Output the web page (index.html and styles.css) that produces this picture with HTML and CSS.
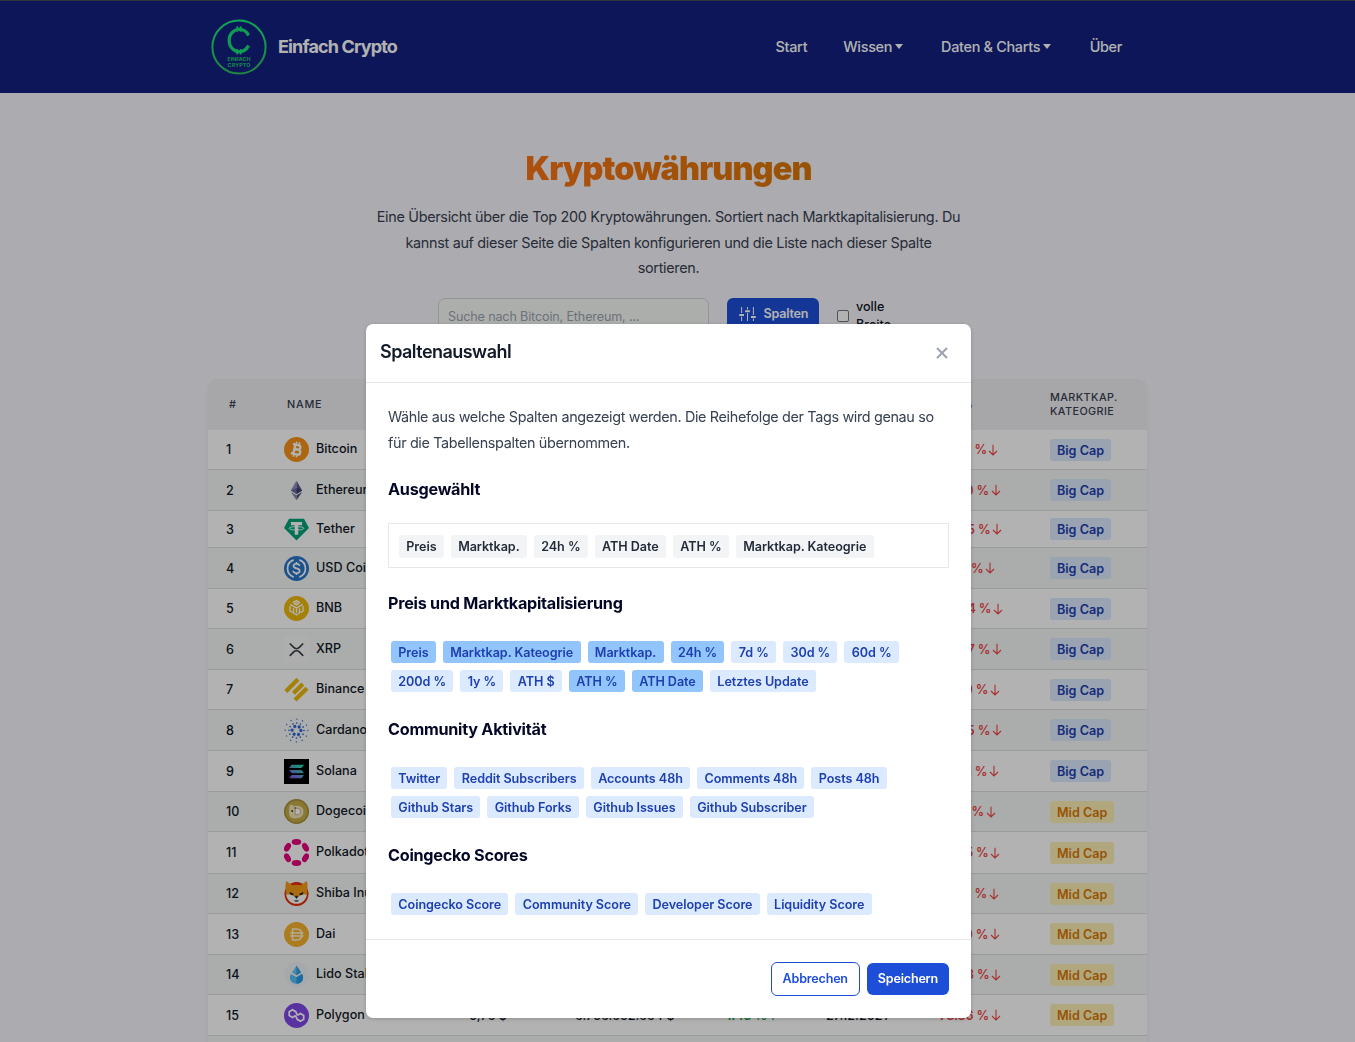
FILE: index.html
```html
<!DOCTYPE html>
<html lang="de">
<head>
<meta charset="utf-8">
<title>Kryptowährungen – Einfach Crypto</title>
<link rel="stylesheet" href="styles.css">
</head>
<body>
<svg class="defs" width="0" height="0" aria-hidden="true">
  <symbol id="down" viewBox="0 0 10 12"><path d="M5 .8v10M1 7l4 4 4-4" fill="none" stroke="currentColor" stroke-width="1.1"/></symbol>
  <symbol id="up" viewBox="0 0 10 12"><path d="M5 11.2v-10M1 5l4-4 4 4" fill="none" stroke="currentColor" stroke-width="1.1"/></symbol>
</svg>
<header class="topbar">
  <div class="topbar-inner">
    <a class="brand">
      <svg class="logo" viewBox="0 0 56 56">
        <defs><linearGradient id="lg" x1="0" y1="0" x2="0" y2="1"><stop offset="0" stop-color="#16ef7c"/><stop offset="1" stop-color="#2fbd5c"/></linearGradient></defs>
        <circle cx="28" cy="28" r="26.6" fill="none" stroke="url(#lg)" stroke-width="2"/>
        <path d="M37.500 16.500A10.200 11.200 0 1 0 37.500 26.500" fill="none" stroke="#17e078" stroke-width="3.200"/>
        <path d="M26.300 7.200v5.500M29.700 7.200v5.500M26.300 30v5.500M29.700 30v5.500" stroke="#17e078" stroke-width="1.800"/>
        <text x="28" y="42" class="logo-text" textLength="23">EINFACH</text>
        <text x="28" y="48" class="logo-text" textLength="23">CRYPTO</text>
      </svg>
      <span class="brand-name">Einfach Crypto</span>
    </a>
    <nav class="nav">
      <a class="n-start">Start</a>
      <a class="n-wissen">Wissen<i class="caret"></i></a>
      <a class="n-daten">Daten &amp; Charts<i class="caret"></i></a>
      <a>Über</a>
    </nav>
  </div>
</header>

<main>
  <section class="intro">
    <h1>Kryptowährungen</h1>
    <p>Eine Übersicht über die Top 200 Kryptowährungen. Sortiert nach Marktkapitalisierung. Du kannst auf dieser Seite die Spalten konfigurieren und die Liste nach dieser Spalte sortieren.</p>
    <div class="controls">
      <div class="search">Suche nach Bitcoin, Ethereum, ...</div>
      <div class="columns-btn">
        <svg width="17" height="16" viewBox="0 0 17 16" fill="none" stroke="#fff"><path d="M2.6 1v6M2.6 10.500v4.500M8.500 1v2.500M8.500 7v8M14.400 1v8M14.400 12.500v2.500" stroke-width="1"/><path d="M.2 9h4.800M6.100 5.200h4.800M12 11h4.800" stroke-width="2"/></svg>
        Spalten
      </div>
      <label class="full"><i class="check"></i><span>volle Breite</span></label>
    </div>
  </section>

  <section class="table">
    <div class="row head"><span class="hash">#</span><span class="hname">Name</span><span></span><span></span><span></span><span></span><span>ATH %</span><span>Marktkap. Kateogrie</span></div>

    <div class="row h40"><b>1</b><span class="coin"><svg viewBox="0 0 25 25"><circle cx="12.500" cy="12.500" r="12.500" fill="#f7931a"/><g transform="rotate(13 12.5 12.5)" fill="none" stroke="#fff" stroke-width="2.300"><path d="M10.300 7.500v10M7.800 7.700h5.700a2.300 2.300 0 0 1 0 4.600h-3.200M10.300 12.300h4a2.500 2.500 0 0 1 0 5H7.800"/><path d="M11 4.700v3M14 4.700v3M11 17.300v3M14 17.300v3" stroke-width="1.500"/></g></svg>Bitcoin</span><span></span><span></span><span></span><span></span><span class="neg">-71.53 %<svg><use href="#down"/></svg></span><span><em class="big">Big Cap</em></span></div>
    <div class="row h41"><b>2</b><span class="coin"><svg viewBox="0 0 25 25"><path d="M12.500 2.800 6.800 12.600l5.700 3.300z" fill="#8b8bb5"/><path d="M12.500 2.800l5.700 9.800-5.700 3.300z" fill="#55558a"/><path d="M12.500 10l-5.700 2.600 5.700 3.300z" fill="#6a6aa0"/><path d="M12.500 10l5.700 2.600-5.700 3.300z" fill="#3c3c70"/><path d="M6.800 13.900l5.700 8.300v-5z" fill="#8585ae"/><path d="M18.200 13.900l-5.700 8.300v-5z" fill="#51517f"/></svg>Ethereum</span><span></span><span></span><span></span><span></span><span class="neg">-74.80 %<svg><use href="#down"/></svg></span><span><em class="big">Big Cap</em></span></div>
    <div class="row h37"><b>3</b><span class="coin"><svg viewBox="0 0 25 25"><path d="M5 1.800h15l5 9.200-12.500 12.500L0 11z" fill="#00a478"/><path d="M6.900 5h11.200v3.300h-3.800v9.500h-3.600V8.300H6.900z" fill="#fff"/><ellipse cx="12.500" cy="11.300" rx="7.400" ry="1.700" fill="none" stroke="#fff" stroke-width=".9"/></svg>Tether</span><span></span><span></span><span></span><span></span><span class="neg">-24.45 %<svg><use href="#down"/></svg></span><span><em class="big">Big Cap</em></span></div>
    <div class="row h41"><b>4</b><span class="coin"><svg viewBox="0 0 25 25"><circle cx="12.500" cy="12.500" r="12.500" fill="#2775ca"/><path d="M9.700 3.900a9.100 9.100 0 0 0 0 17.200M15.300 3.900a9.100 9.100 0 0 1 0 17.200M15.500 9.900c-.2-1.300-1.300-2-3-2s-3 .8-3 2.100c0 3.200 6.200 1.600 6.200 4.900 0 1.400-1.300 2.200-3.200 2.200s-3.200-.8-3.300-2.300M12.500 5.900v2M12.500 17v2.100" fill="none" stroke="#fff" stroke-width="1.700"/></svg>USD Coin</span><span></span><span></span><span></span><span></span><span class="neg">-25.11 %<svg><use href="#down"/></svg></span><span><em class="big">Big Cap</em></span></div>
    <div class="row h40"><b>5</b><span class="coin"><svg viewBox="0 0 25 25"><circle cx="12.500" cy="12.500" r="12.500" fill="#eeb90c"/><path d="M9 6.600l3.500-2 3.500 2M6.200 8.400 12.500 12l6.300-3.600M6 10v5l2.600 1.500M19 10v5l-2.600 1.500M9.500 12.200v4.800l3 2 3-2v-4.800M12.500 12v5M10.500 7.800l2-1.100 2 1.100-2 1.200z" fill="none" stroke="#fff" stroke-width="1.300"/></svg>BNB</span><span></span><span></span><span></span><span></span><span class="neg">-58.44 %<svg><use href="#down"/></svg></span><span><em class="big">Big Cap</em></span></div>
    <div class="row h41"><b>6</b><span class="coin"><svg viewBox="0 0 25 25"><path d="M0 0h25v25H0z" fill="#fafafa"/><path d="M5.800 6.500l3.900 3.900a4 4 0 0 0 5.600 0l3.900-3.900M5.800 18.800l3.900-3.900a4 4 0 0 1 5.600 0l3.900 3.900" fill="none" stroke="#3a4145" stroke-width="1.700"/></svg>XRP</span><span></span><span></span><span></span><span></span><span class="neg">-88.47 %<svg><use href="#down"/></svg></span><span><em class="big">Big Cap</em></span></div>
    <div class="row h40"><b>7</b><span class="coin"><svg viewBox="0 0 25 25" fill="#eeb90c"><path d="M12.500.8l3 3L6.200 13.100l-3-3zM17.300 5.500l3 3L11 17.800l-3-3zM21.500 9.800l3 3L12.500 24.600l-3-3zM3.300 10l3 3-3 3-3-3z"/></svg>Binance USD</span><span></span><span></span><span></span><span></span><span class="neg">-13.00 %<svg><use href="#down"/></svg></span><span><em class="big">Big Cap</em></span></div>
    <div class="row h41"><b>8</b><span class="coin"><svg viewBox="0 0 25 25" fill="none" stroke="#3468d1" stroke-linecap="round"><circle cx="12.500" cy="12.500" r="4.400" stroke-width="3.300" stroke-dasharray=".01 4.598"/><circle cx="12.500" cy="12.500" r="7.500" stroke-width="1.700" stroke-dasharray=".01 3.917"/><circle cx="12.500" cy="12.500" r="11.400" stroke-width="1.400" stroke-dasharray=".01 5.959"/></svg>Cardano</span><span></span><span></span><span></span><span></span><span class="neg">-89.85 %<svg><use href="#down"/></svg></span><span><em class="big">Big Cap</em></span></div>
    <div class="row h41"><b>9</b><span class="coin"><svg viewBox="0 0 25 25"><defs><linearGradient id="sol" x1="0" y1="1" x2="1" y2="0"><stop stop-color="#9945ff"/><stop offset="1" stop-color="#14f195"/></linearGradient></defs><path d="M0 0h25v25H0z"/><path d="M7.600 5.800H20l-2.500 3.300H5.100zM5.100 10.900h12.400l2.500 3.300H7.600zM7.600 16H20l-2.500 3.300H5.100z" fill="url(#sol)"/></svg>Solana</span><span></span><span></span><span></span><span></span><span class="neg">-94.71 %<svg><use href="#down"/></svg></span><span><em class="big">Big Cap</em></span></div>
    <div class="row h40"><b>10</b><span class="coin"><svg viewBox="0 0 25 25"><circle cx="12.500" cy="12.500" r="12.500" fill="#a58f36"/><circle cx="12.500" cy="12.500" r="10.900" fill="#c5ac48"/><path d="M5.500 6.500l2.300-1 2 1.700c5.500-1.200 9.700.8 9.700 5.600 0 4.200-3.400 6.700-7.900 6.700S5 17.500 5 13z" fill="#f0e4b7"/><path d="M11.200 9.300h1.700c2.300 0 3.600 1.100 3.600 3.200s-1.300 3.200-3.600 3.200h-1.700z" fill="#fff" stroke="#b8a66a" stroke-width=".8"/><circle cx="8.200" cy="12" r=".9" fill="#39311c"/><circle cx="11.200" cy="9" r=".7" fill="#39311c"/></svg>Dogecoin</span><span></span><span></span><span></span><span></span><span class="neg">-87.17 %<svg><use href="#down"/></svg></span><span><em class="mid">Mid Cap</em></span></div>
    <div class="row h42"><b>11</b><span class="coin"><svg viewBox="0 0 25 27" class="tall" fill="#e6007a"><ellipse cx="12.500" cy="3" rx="4.800" ry="2.900"/><ellipse cx="12.500" cy="24" rx="4.800" ry="2.900"/><ellipse cx="3.500" cy="8.300" rx="4.700" ry="2.900" transform="rotate(-60 3.500 8.300)"/><ellipse cx="21.500" cy="8.300" rx="4.700" ry="2.900" transform="rotate(60 21.500 8.300)"/><ellipse cx="3.500" cy="18.800" rx="4.700" ry="2.900" transform="rotate(60 3.500 18.800)"/><ellipse cx="21.500" cy="18.800" rx="4.700" ry="2.900" transform="rotate(-60 21.500 18.800)"/></svg>Polkadot</span><span></span><span></span><span></span><span></span><span class="neg">-91.45 %<svg><use href="#down"/></svg></span><span><em class="mid">Mid Cap</em></span></div>
    <div class="row h40"><b>12</b><span class="coin"><svg viewBox="0 0 25 25"><circle cx="12.500" cy="13" r="12" fill="#e42d04"/><path d="M2.200 0l6 4.300c2.700-.9 6-.9 8.600 0L22.800 0c1 4 1 6.500.2 9 .5 3 0 5-1 7.500l-9.500 4-9.500-4C2 14 1.500 12 2 9 1.200 6.500 1.200 4 2.200 0z" fill="#f39b16"/><path d="M2.300 14c3.200-1 6.200 0 7.700 1.500h5c1.500-1.500 4.500-2.500 7.700-1.500-1 5.500-5 8.800-10.200 8.800S3.300 19.500 2.300 14z" fill="#fff"/><path d="M6 11.300l3.500 1.700-1 1-2-.8zM19 11.300L15.500 13l1 1 2-.8zM10.900 15.200h3.200l-1.600 2.400zM10.500 19.700c1.300.8 2.700.8 4 0z" fill="#171717" stroke="#171717" stroke-width=".5"/></svg>Shiba Inu</span><span></span><span></span><span></span><span></span><span class="neg">-90.13 %<svg><use href="#down"/></svg></span><span><em class="mid">Mid Cap</em></span></div>
    <div class="row h41"><b>13</b><span class="coin"><svg viewBox="0 0 25 25"><circle cx="12.500" cy="12.500" r="12.500" fill="#f7b22f"/><path d="M8.500 7h4.200c3.200 0 5.100 2 5.100 5.500S15.900 18 12.700 18H8.500zM6.200 11h13.200M6.200 14h13.200" fill="none" stroke="#fff3d7" stroke-width="1.500"/></svg>Dai</span><span></span><span></span><span></span><span></span><span class="neg">-27.50 %<svg><use href="#down"/></svg></span><span><em class="mid">Mid Cap</em></span></div>
    <div class="row h40"><b>14</b><span class="coin"><svg viewBox="0 0 25 25"><circle cx="12.500" cy="12.500" r="12.500" fill="#eff1f7"/><path d="M12.500 3.500L8 10.600l4.500 2.700 4.500-2.700z" fill="#66c6f5"/><path d="M12.500 3.500v9.800l4.500-2.700z" fill="#2c9fe4"/><path d="M7 12l5.500 3.200L18 12c3 5-.5 9.700-5.500 9.700S4 17 7 12z" fill="#54bff4"/><path d="M12.500 15.200L18 12c3 5-.5 9.700-5.500 9.700z" fill="#269be2"/></svg>Lido Staked Ether</span><span></span><span></span><span></span><span></span><span class="neg">-74.43 %<svg><use href="#down"/></svg></span><span><em class="mid">Mid Cap</em></span></div>
    <div class="row h41"><b>15</b><span class="coin"><svg viewBox="0 0 25 25"><circle cx="12.500" cy="12.500" r="12.500" fill="#8247e5"/><path d="M11.700 12.500l-3.200 2-3.300-2V8.700l3.300-2 3.200 2 1.800 3.600M13.500 12.300l3-1.800 3.200 2v3.800l-3.200 2-3.300-2-1.700-3.800" fill="none" stroke="#fff" stroke-width="1.700"/></svg>Polygon</span><span>0,76 $</span><span>6.756.652.664 $</span><span class="pos">1.43 %<svg><use href="#up"/></svg></span><span>27.12.2021</span><span class="neg">-73.86 %<svg><use href="#down"/></svg></span><span><em class="mid">Mid Cap</em></span></div>
    <div class="row h41"></div>
  </section>
</main>

<div class="overlay">
  <div class="modal">
    <div class="modal-head">
      <h2>Spaltenauswahl</h2>
      <svg width="12" height="12" viewBox="0 0 12 12"><path d="M1 1l10 10M11 1L1 11" stroke="#9ca3af" stroke-width="2"/></svg>
    </div>
    <div class="modal-body">
      <p>Wähle aus welche Spalten angezeigt werden. Die Reihefolge der Tags wird genau so für die Tabellenspalten übernommen.</p>
      <h3>Ausgewählt</h3>
      <div class="selected"><span>Preis</span><span>Marktkap.</span><span>24h %</span><span>ATH Date</span><span>ATH %</span><span>Marktkap. Kateogrie</span></div>
      <h3>Preis und Marktkapitalisierung</h3>
      <div class="tags"><span class="on">Preis</span><span class="on">Marktkap. Kateogrie</span><span class="on">Marktkap.</span><span class="on">24h %</span><span>7d %</span><span>30d %</span><span>60d %</span><span>200d %</span><span>1y %</span><span>ATH $</span><span class="on">ATH %</span><span class="on">ATH Date</span><span>Letztes Update</span></div>
      <h3>Community Aktivität</h3>
      <div class="tags"><span>Twitter</span><span>Reddit Subscribers</span><span>Accounts 48h</span><span>Comments 48h</span><span>Posts 48h</span><span>Github Stars</span><span>Github Forks</span><span>Github Issues</span><span>Github Subscriber</span></div>
      <h3>Coingecko Scores</h3>
      <div class="tags"><span>Coingecko Score</span><span>Community Score</span><span>Developer Score</span><span>Liquidity Score</span></div>
    </div>
    <div class="modal-foot"><div class="btn ghost">Abbrechen</div><div class="btn">Speichern</div></div>
  </div>
</div>
</body>
</html>
```
FILE: styles.css
```css
* { box-sizing: border-box; }
html, body { height: 1042px; overflow: hidden; }
body { margin: 0; font-family: Inter, "Liberation Sans", sans-serif; font-size: 14.4px; color: #111827; background: #f7f6fc; }
h1, h2, h3, p { margin: 0; }
.defs { display: block; height: 0; }

.topbar { height: 93px; background: #12207f; color: #fff; border-top: 1px solid #4b4d55; }
.topbar-inner { width: 911px; height: 91px; margin-left: 211px; display: flex; align-items: center; justify-content: space-between; }
.brand { display: flex; align-items: center; gap: 10.500px; }
.logo { width: 56px; height: 56px; margin-right: .5px; }
.logo-text { font: 600 5.400px Inter, sans-serif; fill: #20d36a; text-anchor: middle; }
.brand-name { font-size: 18px; font-weight: 700; letter-spacing: -0.860px; }
.nav { display: flex; align-items: center; font-weight: 500; letter-spacing: -0.3px; }
.nav a { display: flex; align-items: center; }
.n-start { margin-right: 36px; }
.n-wissen { margin-right: 38px; }
.n-daten { margin-right: 38.500px; }
.caret { margin-left: 3px; border: 4.500px solid transparent; border-top: 5.500px solid #fff; border-bottom: 0; }

main { width: 1337px; }
.intro { display: flex; flex-direction: column; align-items: center; height: 286px; padding-top: 53px; }
h1 { font-size: 32.4px; line-height: 46px; font-weight: 900; letter-spacing: -0.9px; color: transparent; background: linear-gradient(to right, #f97316, #d97706); background-clip: text; -webkit-background-clip: text; }
.intro p { width: 605px; margin-top: 12px; padding: 0 8px; text-align: center; line-height: 25.600px; letter-spacing: -0.310px; color: #374151; }
.controls { display: flex; align-items: flex-start; margin-top: 17px; width: 461px; }
.search { width: 271px; height: 37px; padding: 0 9px; border: 1px solid #d1d5db; border-radius: 7px; background: #f7faf7; color: #9ca3af; font-size: 12.600px; line-height: 35px; letter-spacing: -0.150px; }
.columns-btn { display: flex; align-items: center; gap: 7.500px; width: 92px; height: 32px; margin-left: 18px; padding-left: 12px; border-radius: 6px; background: #1d4ed8; color: #fff; font-size: 12.600px; font-weight: 600; letter-spacing: -0.250px; }
.full { display: flex; gap: 7px; margin-left: 18px; font-size: 12.600px; font-weight: 500; line-height: 18px; }
.full span { width: 40px; }
.check { width: 12px; height: 12px; flex: none; margin-top: 12px; border: 1px solid #767676; border-radius: 2px; background: #fff; }

.table { width: 939px; margin-left: 208px; border-radius: 8px 8px 0 0; overflow: hidden; box-shadow: 0 4px 6px rgba(0, 0, 0, .05); background: #fff; }
.row { display: grid; grid-template-columns: 76px 185px 106px 151px 100px 108px 116px 97px; align-items: center; border-bottom: 1px solid #dcdfe3; font-size: 12.600px; font-weight: 500; white-space: nowrap; }
.row:nth-child(odd) { background: #f5f8f6; }
.row b { padding-left: 18px; font-weight: 500; }
.row.head { height: 51px; border: 0; background: #f0f0f3; color: #374151; font-size: 10.800px; line-height: 14px; letter-spacing: .800px; text-transform: uppercase; white-space: normal; }
.row.head span:last-child { letter-spacing: .420px; }
.hash { padding-left: 21px; }
.hname { padding-left: 3px; }
.h37 { height: 37px; }
.h40 { height: 40px; }
.h41 { height: 41px; }
.h42 { height: 42px; }
.coin { display: flex; align-items: center; gap: 7px; padding-bottom: 2px; }
.coin svg { width: 25px; height: 25px; flex: none; margin-bottom: -2px; }
.coin svg.tall { height: 27px; }
.neg, .pos { display: flex; align-items: center; gap: 1.500px; font-weight: 600; letter-spacing: -0.100px; color: #ef4444; }
.pos { color: #16a34a; }
.neg svg, .pos svg { width: 10px; height: 12px; }
.row em { display: block; width: max-content; padding: 0 7px; border-radius: 3px; font-style: normal; font-weight: 600; height: 22px; line-height: 23px; }
.big { background: #dbeafe; color: #1e40af; }
.mid { background: #fdf0b5; color: #d97706; }

.overlay { position: fixed; inset: 0; padding: 324px 0 0 366px; background: rgba(0, 0, 0, .3); }
.modal { width: 605px; height: 694px; display: flex; flex-direction: column; border-radius: 7px; background: #fff; box-shadow: 0 1px 4px rgba(0, 0, 0, .2); }
.modal-head { height: 59px; display: flex; align-items: center; justify-content: space-between; padding: 0 23px 0 14px; border-bottom: 1px solid #e5e7eb; }
.modal-head h2 { margin-top: -3px; font-size: 18px; font-weight: 600; letter-spacing: -0.540px; }
.modal-body { height: 556px; padding: 21px 22px; }
.modal-body p { line-height: 25.600px; letter-spacing: -0.350px; color: #374151; }
.modal-body h3 { height: 26px; font-size: 16.200px; line-height: 26px; font-weight: 700; letter-spacing: -0.250px; color: #030726; }
.modal-body p + h3 { margin-top: 21px; }
.modal-body div + h3 { margin-top: 24px; }
.modal-body .selected + h3 { margin-top: 22px; }
.selected, .tags { display: flex; flex-wrap: wrap; align-content: flex-start; gap: 7px; font-size: 12.600px; font-weight: 600; }
.selected { height: 45px; margin-top: 21px; padding: 11px 10px; border: 1px solid #e5e7eb; }
.selected span, .tags span { height: 22px; padding: 0 7.300px; border-radius: 3px; line-height: 23px; letter-spacing: -0.055px; color: #1e40af; background: #dbeafe; }
.selected span { height: 23px; color: #1f2937; background: #f3f4f6; }
.tags { margin-top: 25px; padding-left: 3px; }
.tags span.on { background: #93c5fd; }
.modal-foot { flex: 1; display: flex; align-items: center; justify-content: flex-end; gap: 7px; padding: 0 22px; border-top: 1px solid #e5e7eb; }
.btn { height: 32px; padding: 0 11px; border-radius: 6px; background: #1d4ed8; color: #fff; font-size: 12.600px; font-weight: 600; line-height: 32px; letter-spacing: -0.220px; }
.btn.ghost { height: 34px; border: 1px solid #1d4ed8; background: #fff; color: #1d4ed8; }
```
